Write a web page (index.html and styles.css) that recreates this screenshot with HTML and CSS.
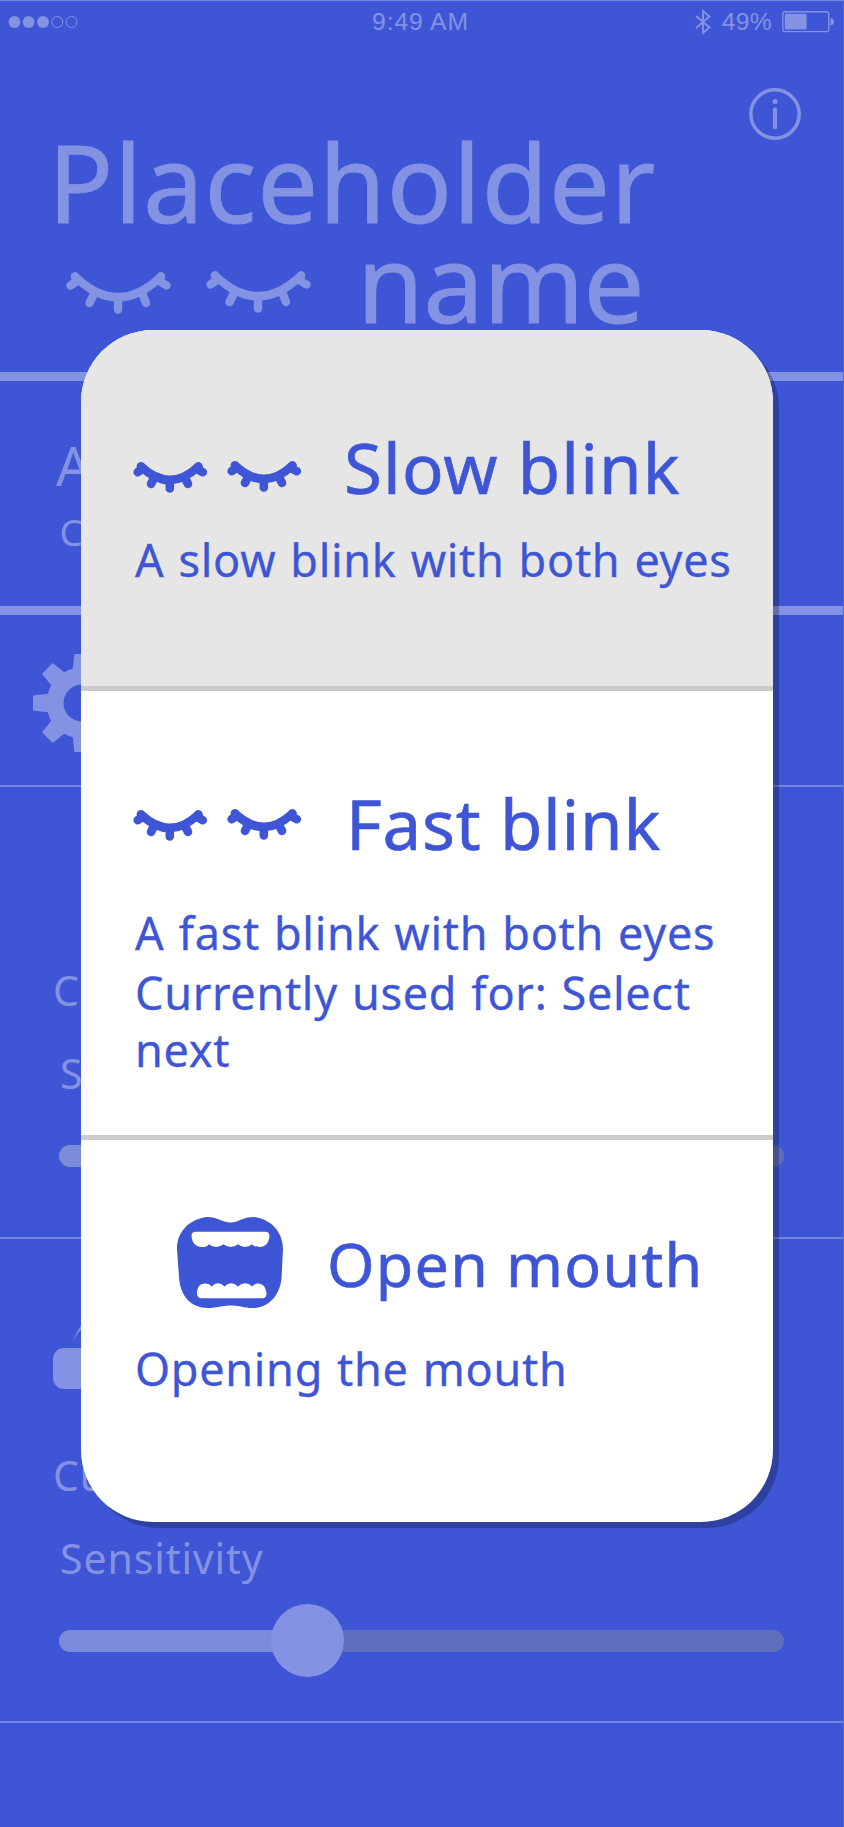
FILE: index.html
```html
<!DOCTYPE html>
<html lang="en">
<head>
<meta charset="utf-8">
<title>Placeholder name</title>
<link rel="stylesheet" href="styles.css">
</head>
<body>
<svg width="0" height="0" class="defs">
  <defs>
    <symbol id="eye-light" viewBox="0 0 105 42" overflow="visible">
      <g fill="none" stroke="currentColor" stroke-width="8.400" stroke-linecap="round" stroke-linejoin="round">
        <path d="M9 4.500Q52 46 95 4.500"/>
        <path d="M9 4.500L11 9L4.500 13.500M95 4.500L93 9L100.500 13.500M28 22L23.500 31M52 26V37.500M76.500 22L80 31"/>
      </g>
    </symbol>
    <symbol id="eye" viewBox="0 0 74 31" overflow="visible">
      <g fill="none" stroke="currentColor" stroke-width="8.600" stroke-linecap="round" stroke-linejoin="round">
        <path d="M7 4.500Q35.800 31.500 64.300 4.500"/>
        <path d="M7 4.500L8.500 7L3.700 10.200M64.300 4.500L63 7L68.800 10.200M19 18L17 22M35.800 19V26.500M52 18L54 22"/>
      </g>
    </symbol>
  </defs>
</svg>
<div class="screen">
  <header class="header">
    <div class="status">
      <svg class="signal" width="72" height="14" viewBox="0 0 72 14">
        <g fill="currentColor"><circle cx="6.500" cy="7" r="5.900"/><circle cx="20.600" cy="7" r="5.900"/><circle cx="35" cy="7" r="5.900"/></g>
        <g fill="none" stroke="currentColor"><circle cx="49.200" cy="7" r="5.500"/><circle cx="63.600" cy="7" r="5.500"/></g>
      </svg>
      <span class="time">9:49 AM</span>
      <div class="power">
        <svg width="16" height="24" viewBox="0 0 16 24"><path d="M1 6L14.500 17.500L8 23V1L14.500 6.500L1 18" fill="none" stroke="currentColor" stroke-width="1.900"/></svg>
        <span class="percent">49%</span>
        <svg width="53" height="22" viewBox="0 0 53 22"><rect x=".8" y=".8" width="46" height="19.800" rx="2" fill="none" stroke="currentColor" stroke-width="1.400"/><rect x="2.800" y="2.800" width="21.800" height="15.800" rx="1" fill="currentColor"/><path d="M48.500 7Q52 7.500 52 10.700T48.500 14.500Z" fill="currentColor"/></svg>
      </div>
    </div>
    <div class="info-row">
      <svg width="52" height="52" viewBox="0 0 52 52"><circle cx="26" cy="26" r="24.200" fill="none" stroke="currentColor" stroke-width="3.500"/><circle cx="26" cy="13.600" r="2.500" fill="currentColor"/><path d="M26 21.500V39.500" stroke="currentColor" stroke-width="4.200" stroke-linecap="round"/></svg>
    </div>
    <h1 class="title">Placeholder</h1>
    <div class="title-row">
      <svg class="eye-large" width="105" height="42"><use href="#eye-light"/></svg>
      <svg class="eye-large right" width="105" height="42"><use href="#eye-light"/></svg>
      <h1 class="title name">name</h1>
    </div>
  </header>
  <section class="actions">
    <div class="action">A</div>
    <div class="action-detail">C</div>
  </section>
  <section class="settings">
    <svg width="98" height="98" viewBox="-49 -49 98 98">
      <defs><path id="tooth" d="M-9.500 -32L-7.500 -49H7.500L9.500 -32Z"/></defs>
      <g fill="currentColor">
        <use href="#tooth"/><use href="#tooth" transform="rotate(45)"/><use href="#tooth" transform="rotate(90)"/><use href="#tooth" transform="rotate(135)"/><use href="#tooth" transform="rotate(180)"/><use href="#tooth" transform="rotate(225)"/><use href="#tooth" transform="rotate(270)"/><use href="#tooth" transform="rotate(315)"/>
      </g>
      <circle r="27" fill="none" stroke="currentColor" stroke-width="17"/>
    </svg>
  </section>
  <section class="gesture first">
    <div class="label used">Cu</div>
    <div class="label">S</div>
    <div class="slider"><div class="fill"></div><div class="knob"></div></div>
  </section>
  <section class="gesture second">
    <svg class="brow" width="100" height="68" viewBox="0 0 100 68"><path d="M20 19Q23 8 33 -4L35 0Q26 6 20 19Z" fill="currentColor"/><rect y="25" width="94" height="41" rx="11" fill="currentColor"/></svg>
    <div class="label used">Cu</div>
    <div class="label">Sensitivity</div>
    <div class="slider"><div class="fill"></div><div class="knob"></div></div>
  </section>
</div>
<div class="modal">
  <div class="option selected">
    <div class="heading">
      <svg class="eye" width="74" height="31"><use href="#eye"/></svg>
      <svg class="eye right" width="74" height="31"><use href="#eye"/></svg>
      <h2 class="slow">Slow blink</h2>
    </div>
    <p class="slow-text">A slow blink with both eyes</p>
  </div>
  <div class="option middle">
    <div class="heading">
      <svg class="eye" width="74" height="31"><use href="#eye"/></svg>
      <svg class="eye right" width="74" height="31"><use href="#eye"/></svg>
      <h2 class="fast">Fast blink</h2>
    </div>
    <p class="fast-text">A fast blink with both eyes</p>
    <p class="used-text">Currently used for: Select<br>next</p>
  </div>
  <div class="option last">
    <div class="heading">
      <svg class="mouth" width="106" height="91" viewBox="0 0 106 91">
        <path d="M30 0C40 0 46 5.500 53.500 5.500S66 0 77 0C94 2 106 15 106 32L104.500 62C102 80 91 91 75 91C67 91 63 88.500 54 88.500S40 91 31 91C14 91 3 79 2 60L0 32C0 14 13 2 30 0Z" fill="currentColor"/>
        <path d="M19 14.700H88Q92.500 14.700 92.500 19C92 26 88 30 83 30C79 30 76.500 29 75 27.200Q68 33 61 27.200Q54 33 46.500 27.200Q39 33 32 27.200C30 29.500 28 30 25 30C19 30 15 26 14.500 19Q14.500 14.700 19 14.700ZM24 81.300H86Q89.500 80.500 89.500 76.500C89 70 86 66.500 81 66.500C78 66.500 77 67.800 75.500 69.500Q68 63 61 69.500Q54 63 47.500 69.500Q41 63 34.500 69.500C33 67.500 31 66.500 28 66.500C23 66.500 20 70 20 76.500Q20 80.500 24 81.300Z" fill="#fff"/>
      </svg>
      <h2 class="open">Open mouth</h2>
    </div>
    <p class="open-text">Opening the mouth</p>
  </div>
</div>
</body>
</html>
```
FILE: styles.css
```css
* { box-sizing: border-box; }
body {
  position: relative;
  width: 844px;
  height: 1827px;
  margin: 0;
  overflow: hidden;
  background: #3e56d6;
  color: #8492e3;
  font-family: "Noto Sans", "Open Sans", sans-serif;
}
svg { display: block; flex: none; overflow: visible; }
.defs { position: absolute; }
h1, h2, p { margin: 0; font-weight: 400; white-space: nowrap; }
h1, h2 { -webkit-text-stroke: .009em currentColor; }
.screen { height: 1827px; border-top: 1px solid #7386e0; border-right: 1px solid #5067db; }

.header { height: 380px; border-bottom: 9px solid #8492e3; }
.status {
  display: grid;
  grid-template-columns: 1fr auto 1fr;
  align-items: center;
  height: 43px;
  padding: 0 9px 2px 8px;
  font: 24.7px/30px "Liberation Sans", Arial, sans-serif;
}
.time { margin-right: 1px; letter-spacing: .9px; }
.power { display: flex; justify-content: flex-end; align-items: center; }
.percent { margin: 0 9px 0 10px; letter-spacing: .3px; }
.power svg { position: relative; left: 1px; }
.power svg:first-child { left: -1px; }
.info-row { display: flex; justify-content: flex-end; height: 88px; padding: 44px 42px 0 0; }
.title { height: 100px; padding-left: 48px; font-size: 108px; line-height: 100px; letter-spacing: .9px; }
.title-row { display: flex; align-items: flex-start; padding-left: 66px; }
.title.name { padding: 0; margin-left: 46px; letter-spacing: -.6px; }
.eye-large { margin-top: 40px; }
.eye-large.right { margin: 39px 0 0 35px; }

.actions { height: 234px; padding: 54px 56px 0; border-bottom: 9px solid #8492e3; }
.action { font-size: 54px; line-height: 60px; }
.action-detail { padding: 7px 0 0 3.500px; font-size: 37px; line-height: 60px; }
.settings { height: 172px; padding: 39px 33px 0; border-bottom: 2px solid #7386e0; }

.gesture { display: flex; flex-direction: column; padding: 0 59px; }
.gesture.first { height: 452px; padding-top: 178px; border-bottom: 2px solid #7386e0; }
.gesture.second { height: 484px; padding-top: 84px; border-bottom: 2px solid #7386e0; }
.brow { margin: 0 0 58px -6px; }
.label { height: 50px; padding-left: 1px; font-size: 41px; line-height: 50px; letter-spacing: .9px; white-space: nowrap; }
.used { margin: 0 0 33px -7px; padding-left: 1px; }
.second .label { position: relative; top: .5px; }
.slider { display: flex; align-items: center; width: 725px; height: 21.500px; margin-top: 48px; border-radius: 11px; background: #5f6fbd; }
.first .slider { margin-top: 47px; }
.fill { width: 248px; height: 100%; margin-right: -36px; border-radius: 11px 0 0 11px; background: #7a8bda; }
.knob { width: 73px; height: 73px; border-radius: 50%; background: #8492e3; }

.modal {
  position: absolute;
  left: 81px;
  top: 329.500px;
  width: 692px;
  height: 1192.500px;
  overflow: hidden;
  border-radius: 72px;
  background: #fff;
  color: #3e56d6;
  box-shadow: 6px 6px 0 rgba(0, 0, 0, .25);
}
.option { padding-left: 52.500px; }
.selected { height: 361px; padding-top: 97px; background: #e6e6e6; border-bottom: 5px solid #cbcbcb; }
.middle { height: 449.500px; padding-top: 92px; border-bottom: 5px solid #cbcbcb; }
.last { padding-top: 84px; }
.heading { display: flex; align-items: flex-start; height: 80px; }
.heading .eye { margin-top: 35px; }
.heading .right { margin: 34.500px 0 0 20.500px; }
.middle .heading .eye { margin-top: 27px; }
.middle .heading .right { margin-top: 26.500px; }
h2 { font-size: 69px; line-height: 80px; letter-spacing: 1.100px; }
.slow { margin-left: 42px; }
.fast { margin-left: 44px; letter-spacing: .7px; }
.mouth { margin: -7px 0 0 43.500px; }
.open { margin-left: 44px; font-size: 61px; letter-spacing: 1.200px; }
p { padding-left: 1.500px; font-size: 45px; line-height: 58px; letter-spacing: .7px; word-spacing: 1.700px; -webkit-text-stroke: .3px currentColor; }
.slow-text { margin-top: 24px; }
.fast-text { margin-top: 41px; }
.used-text { margin-top: 2px; line-height: 57px; }
.open-text { margin-top: 36px; }
```
